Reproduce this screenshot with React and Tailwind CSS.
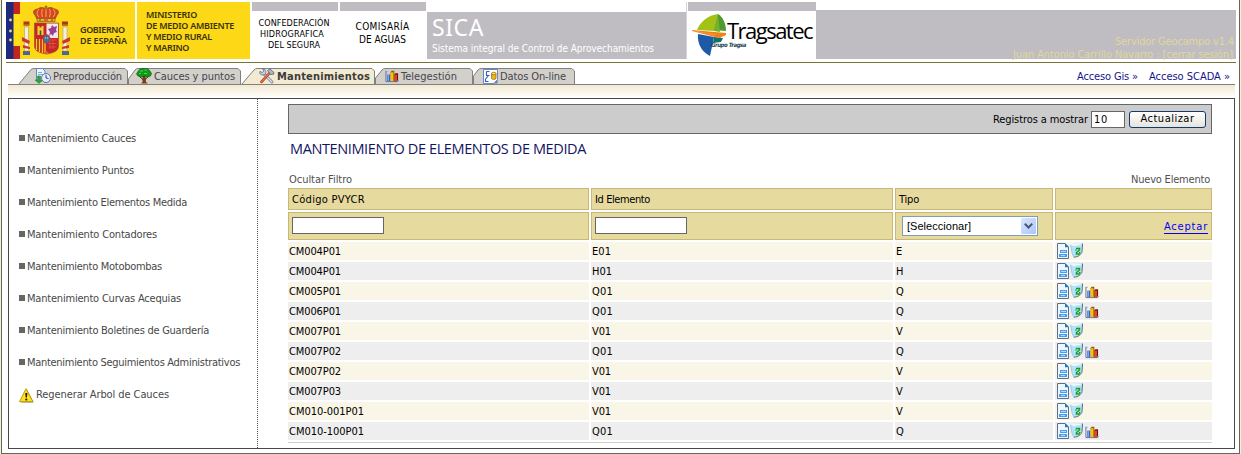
import React, { useLayoutEffect, useRef, useState } from "react";

/* Text run spread evenly over a given width by adjusting its tracking. */
function Fit({ w, children, className = "" }) {
  const ref = useRef(null);
  const [spacing, setSpacing] = useState(0);
  useLayoutEffect(() => {
    const natural = ref.current.getBoundingClientRect().width;
    setSpacing((w - natural) / String(children).length);
  }, [w, children]);
  return (
    <span ref={ref} className={"inline-block whitespace-nowrap " + className} style={{ letterSpacing: spacing + "px" }}>
      {children}
    </span>
  );
}

function Crest() {
  return (
    <svg className="block h-[57px] w-[64px] shrink-0" viewBox="0 0 64 57">
      <rect width="8" height="57" fill="#1f2a7c" />
      <rect x="7.5" width="6.5" height="12" fill="#c3261c" />
      <rect x="7.5" y="12" width="6.5" height="32" fill="#ffe01a" />
      <rect x="7.5" y="44" width="6.5" height="13" fill="#c3261c" />
      <g fill="#e9dc9a">
        <circle cx="4.5" cy="18" r="1.4" />
        <circle cx="4.5" cy="29" r="1.4" />
        <circle cx="4.5" cy="38" r="1.4" />
      </g>
      {/* pillars */}
      <g>
        <rect x="18.5" y="25" width="4" height="24" fill="#f3eee0" stroke="#9b9078" strokeWidth=".5" />
        <rect x="57" y="25" width="4" height="24" fill="#f3eee0" stroke="#9b9078" strokeWidth=".5" />
        <path d="M17.5 19.5h6v3h-6zM56 19.5h6v3h-6z" fill="#b5321e" />
        <path d="M17.5 23h6M56 23h6" stroke="#8a6a10" strokeWidth="1.4" />
        <path d="M17 50h7v3h-7zM56 50h7v3h-7z" fill="#3d6b9a" />
        <path d="M17 49.5h7M56 49.5h7" stroke="#8a6a10" />
        <path d="M16 35l8 4-1 3-7-3zM64 35l-8 4 1 3 7-3zM17 43l7 2v2l-7-1zM63 43l-7 2v2l7-1z" fill="#c9382a" />
      </g>
      {/* crown */}
      <path d="M29 13c-3-3-1-6 3-6 2-2 5-2 8 0 3-2 6-2 8 0 4 0 6 3 3 6l-2 4H31z" fill="#d6422c" stroke="#8f5a12" strokeWidth=".9" />
      <path d="M33 15c-3-3-2-6 0-8M47 15c3-3 2-6 0-8M40 15V6M36.500 15c-1-3-1-6 0-8M43.500 15c1-3 1-6 0-8" stroke="#f0b936" strokeWidth="1" fill="none" />
      <path d="M38.700 5h2.600M40 3.500v4" stroke="#8f5a12" strokeWidth="1.100" />
      <path d="M31 16.500h18v3H31z" fill="#e8b130" stroke="#8f5a12" strokeWidth=".7" />
      <path d="M33 18h2M38 18h4M45 18h2" stroke="#b82a24" strokeWidth="1.200" />
      {/* shield */}
      <path d="M28.500 21h24v23c0 5-5 7-12 8-7-1-12-3-12-8z" fill="#c8242a" stroke="#8c5a1c" strokeWidth=".7" />
      <path d="M40.500 21.500H52V36H40.500z" fill="#f4e6ea" />
      <path d="M43 34l1-4-2-3 3-1 1-3 2 2 3-1-1 4 1 2-3 1-1 3-2-2z" fill="#9b3f92" />
      <path d="M31.500 24h2v1.500h2V24h2v9h-6z" fill="#f2cf33" />
      <path d="M33.700 28.500h1.600V33h-1.600z" fill="#2e5b34" />
      <path d="M30.500 37v11M33.500 37v13M36.500 37v14M39 37v15" stroke="#f5cf1b" strokeWidth="1.300" />
      <path d="M42.500 38h8M42.500 41.500h8M43 45h7M44 38v9M47 38v9" stroke="#dc6a4e" strokeWidth=".6" />
      <ellipse cx="40.500" cy="37" rx="3.400" ry="4.300" fill="#3e6fa8" stroke="#c8342a" strokeWidth=".9" />
      <circle cx="39.400" cy="36" r=".7" fill="#e7d26a" />
      <circle cx="41.600" cy="36" r=".7" fill="#e7d26a" />
      <path d="M37 52l3.500-3 3.500 3z" fill="#d4662a" />
    </svg>
  );
}

function TragsatecMark() {
  return (
    <svg className="absolute left-[5px] top-[12px] h-[44px] w-[38px]" viewBox="0 0 38 44">
      <path d="M5 16C8 8 16 1 26 0L22 17z" fill="#a3c214" />
      <path d="M26 0c5 3 8 10 8 17L22 16z" fill="#4f9a2e" />
      <path d="M26 0l-4 17 6 1z" fill="#76b02a" />
      <path d="M6 20l16 3-4 19C10 38 5 30 6 20z" fill="#1c5aa8" />
      <path d="M22 23l9 1-2 4-8 1z" fill="#14706a" />
      <path d="M0 16l34 3v2l-7 3L0 17z" fill="#f08018" />
      <path d="M0 16.500l24 4.500" stroke="#f6b26a" strokeWidth=".5" />
    </svg>
  );
}

function ClockDocIcon() {
  return (
    <svg className="block h-4 w-4" viewBox="0 0 16 16">
      <path d="M1.500.5h6l2.500 2.500v9.500H1.500z" fill="#eef5fd" stroke="#5b8bc4" />
      <path d="M3 4.500h4M3 6.500h5" stroke="#7fa9dc" />
      <path d="M2.500 8h3v4H8l-4 3.500L0 12h2.500z" fill="#2fa23a" stroke="#1c7a28" strokeWidth=".5" />
      <circle cx="11" cy="10" r="4.500" fill="#e6effb" stroke="#5872b8" />
      <path d="M11 7v3l2.500.5" stroke="#33468c" fill="none" />
    </svg>
  );
}

function TreeIcon() {
  return (
    <svg className="block h-4 w-4" viewBox="0 0 16 16">
      <path d="M6.500 8h3l.5 6 2 1.500H5L6.500 14z" fill="#7a3d10" />
      <path d="M3.500 8.500L7 11.500M12.500 8.500l-3.500 3" stroke="#3a2508" />
      <path d="M2 3.500l2-2.500 4-.8 4 .8 2 2 1.500 2.500-1 2.500-3.500 1L8 7.800 5 9 2 8 .5 6z" fill="#0f9a1a" stroke="#0a4a10" strokeWidth=".6" />
      <path d="M4 3h3M8.500 2h2.500M3 5.500h2M8 5.500h3" stroke="#3fe04a" strokeWidth="1.100" />
    </svg>
  );
}

function ToolsIcon() {
  return (
    <svg className="block h-4 w-4" viewBox="0 0 16 16">
      <path d="M4.500 5.500l8.500 8.500" stroke="#4d5f80" strokeWidth="2.600" strokeLinecap="round" />
      <path d="M4.500 5.500l8.500 8.500" stroke="#dde7f5" strokeWidth="1.500" strokeLinecap="round" />
      <path d="M3.500.8L5 3 3.300 4.700 1 3.300.7 5.500 3 7l3-.5L7 4 5.800 1.300z" fill="#c9d6ec" stroke="#4d5f80" strokeWidth=".7" />
      <path d="M10.500 5L2.500 13.800" stroke="#9b2a14" strokeWidth="2.600" strokeLinecap="round" />
      <path d="M10.500 5L2.500 13.800" stroke="#f0714a" strokeWidth="1.400" strokeLinecap="round" />
      <path d="M8.500 2.500L11 1l4 3.500-.5 2-1.500-.5-1 1z" fill="#a9b7cf" stroke="#46536e" strokeWidth=".7" />
    </svg>
  );
}

function BarsIcon({ className = "" }) {
  return (
    <svg className={"block " + className} viewBox="0 0 15 15">
      <path d="M1 2v11.500h12.500l1-1.500" fill="none" stroke="#5c6fa0" strokeWidth="1" />
      <path d="M1 2.500h2" stroke="#8fa2cc" />
      <rect x="2.500" y="6" width="3" height="7" fill="#2f62d0" />
      <rect x="3.200" y="6.500" width=".9" height="6" fill="#8fb8f5" />
      <path d="M6 3.500L7 2h3v10l-1 1H6z" fill="#8a6208" />
      <rect x="6" y="3.500" width="3" height="9.500" fill="#f7bd14" />
      <path d="M10 6l1-1.500h3V11l-1 2h-3z" fill="#6d160c" />
      <rect x="10" y="6" width="2.800" height="7" fill="#dd4a20" />
    </svg>
  );
}

function DataIcon() {
  return (
    <svg className="block h-[15px] w-[15px]" viewBox="0 0 15 15">
      <path d="M.5.5h14v10l-3.500 4H.5z" fill="#fbfcff" stroke="#6b87c4" />
      <path d="M11 14.500l3.500-4v4z" fill="#5f7fb5" />
      <path d="M3.500 2.500h3M3.500 2.500v4h3M5.500 6.500L3 9.500M2.500 9.500v3h3" fill="none" stroke="#2c5cc5" strokeWidth="1.100" />
      <path d="M8.500 4.500v5c1 1.200 3.500 1.200 4.500 0v-5z" fill="#f3b70c" stroke="#8a6208" strokeWidth=".7" />
      <ellipse cx="10.750" cy="4.500" rx="2.250" ry="1.200" fill="#ffe27a" stroke="#8a6208" strokeWidth=".7" />
    </svg>
  );
}

function DocIcon() {
  return (
    <svg className="block h-4 w-3 shrink-0" viewBox="0 0 12 16">
      <path d="M.5.5h7.500l3.500 3.500v11.500H.5z" fill="#eef6ff" stroke="#5f6e84" />
      <path d="M8 0l4 4.200H8z" fill="#1f78c4" />
      <path d="M3 7h7v3H3zM2 11h8v3H2z" fill="#4a9cec" />
      <path d="M4 8.500h5M4 12.500h4" stroke="#b5d9fb" />
    </svg>
  );
}

function BinIcon() {
  return (
    <svg className="block h-[15px] w-[13px]" viewBox="0 0 13 15">
      <path d="M.3 2L3.500.8 12.700.4 12 8.500c-.5 2.500-3 5-8.500 5.700L2 10z" fill="#b4e2fb" />
      <path d="M.5 2l3.500 1 8-1.600L9 .7 3.500.8z" fill="#effaff" />
      <path d="M3.800 14.200c4.500-.2 7.700-2.700 8.200-5.700l.6-8" fill="none" stroke="#5b7076" strokeWidth="1" />
      <path d="M.5 2L2 10l1.800 4.200" fill="none" stroke="#8fc4e6" strokeWidth=".8" />
      <path d="M6 5.500h3.500v1.500L6.500 9.500V11H10" fill="none" stroke="#14a01c" strokeWidth="1.500" />
      <path d="M5.200 7h1.500M9 9.500h1.500" stroke="#0f8d18" strokeWidth="1.200" />
    </svg>
  );
}

function WarningIcon() {
  return (
    <svg className="block h-[15px] w-[15px]" viewBox="0 0 15 15">
      <path d="M8 1.500L14.700 14.500H2z" fill="#8c8c7a" />
      <path d="M7 .7L14 13.700H.5z" fill="#ffe21a" stroke="#b39408" strokeWidth=".9" strokeLinejoin="round" />
      <path d="M6.200 5h2.200l-.5 4.500H6.700z" fill="#1c1c10" />
      <circle cx="7.300" cy="11.500" r="1.100" fill="#1c1c10" />
    </svg>
  );
}

function Tab({ box, shape, fill, icon, w, label, bold, pad }) {
  return (
    <div className={"relative flex h-[17px] shrink-0 items-start " + box + " " + pad}>
      <svg className="absolute inset-0 h-full w-full overflow-visible">
        <path d={shape} fill={fill} stroke="#808080" />
      </svg>
      <span className="relative flex h-4 items-center gap-[2px]">
        {icon}
        <Fit w={w} className={"pt-[2px] " + (bold ? "font-bold text-[#3c3c3c]" : "text-[#45454f]")}>{label}</Fit>
      </span>
    </div>
  );
}

const MENU = [
  ["Mantenimiento Cauces", 109],
  ["Mantenimiento Puntos", 107],
  ["Mantenimiento Elementos Medida", 160],
  ["Mantenimiento Contadores", 130],
  ["Mantenimiento Motobombas", 135],
  ["Mantenimiento Curvas Acequias", 154],
  ["Mantenimiento Boletines de Guardería", 182],
  ["Mantenimiento Seguimientos Administrativos", 213],
];

const ROWS = [
  ["CM004P01", "E01", "E"],
  ["CM004P01", "H01", "H"],
  ["CM005P01", "Q01", "Q"],
  ["CM006P01", "Q01", "Q"],
  ["CM007P01", "V01", "V"],
  ["CM007P02", "Q01", "Q"],
  ["CM007P02", "V01", "V"],
  ["CM007P03", "V01", "V"],
  ["CM010-001P01", "V01", "V"],
  ["CM010-100P01", "Q01", "Q"],
];

const GRID = "grid grid-cols-[301px_302px_158px_157px] gap-x-[2px]";
const HEAD = "flex items-center border border-[#c8b878] bg-[#e7da9f]";

function Header() {
  return (
    <header className="flex h-[57px] w-[1230px] text-black">
      <div className="flex w-[129px] items-center bg-[#fdd816]">
        <Crest />
        <div className="flex flex-col pl-[10px] pt-[9px] font-['Noto_Sans'] text-[9px] font-semibold leading-[11px] text-[#3a3208] [font-stretch:normal]">
          <Fit w={45}>GOBIERNO</Fit>
          <Fit w={47}>DE ESPAÑA</Fit>
        </div>
      </div>
      <div className="ml-[2px] flex w-[113px] flex-col bg-[#fdd816] pl-[9px] pt-[8px] font-['Noto_Sans'] text-[9px] font-semibold leading-[10.900px] text-[#3a3208] [font-stretch:normal]">
        <Fit w={51} className="self-start">MINISTERIO</Fit>
        <Fit w={88} className="self-start">DE MEDIO AMBIENTE</Fit>
        <Fit w={66} className="self-start">Y MEDIO RURAL</Fit>
        <Fit w={43} className="self-start">Y MARINO</Fit>
      </div>
      <div className="ml-[2px] flex w-[86px] flex-col items-center border-t-[9px] border-[#bfbdc1] pr-[2px] pt-[7px] text-[9px] leading-[11px]">
        <Fit w={71}>CONFEDERACIÓN</Fit>
        <Fit w={64} className="-ml-[4px]">HIDROGRAFICA</Fit>
        <Fit w={52}>DEL SEGURA</Fit>
      </div>
      <div className="ml-[2px] flex w-[86px] flex-col items-center border-t-[9px] border-[#bfbdc1] pr-px pt-[10px] text-[10px] leading-[12.500px]">
        <Fit w={54}>COMISARÍA</Fit>
        <Fit w={47}>DE AGUAS</Fit>
      </div>
      <div className="ml-px mt-[10px] flex w-[259px] flex-col bg-[#bfbdc1] pl-[5px] text-white">
        <Fit w={52} className="mt-[3px] self-start font-['Noto_Sans'] text-[23px] leading-[25px] [font-stretch:normal]">SICA</Fit>
        <Fit w={222} className="mt-px self-start text-[10px] leading-[15px]">Sistema integral de Control de Aprovechamientos</Fit>
      </div>
      <div className="relative w-[130px] border-l border-[#d5d3d7]">
        <div className="ml-px h-[9px] bg-[#bfbdc1]" />
        <TragsatecMark />
        <div className="absolute left-[40px] top-[17px] h-[22px] font-['Open_Sans'] text-[22px] font-medium leading-[22px] [font-stretch:normal]">
          <Fit w={85}>Tragsatec</Fit>
        </div>
        <div className="absolute left-[24px] top-[40px] h-[6px] text-[6px] font-bold italic leading-[6px] text-[#1f3f50]">
          <Fit w={35}>Grupo Tragsa</Fit>
        </div>
      </div>
      <div className="mt-[8px] flex flex-1 flex-col items-end bg-[#bfbdc1] pt-[25px] text-[11px] leading-[13px] text-[#dfd79c]">
        <Fit w={119} className="mr-[2px]">Servidor Geocampo v1.4</Fit>
        <Fit w={220} className="mr-[3px]">Juan Antonio Carrillo Navarro : [cerrar sesión]</Fit>
      </div>
    </header>
  );
}

function Tabs() {
  return (
    <nav className="ml-[2px] mt-[5px] flex h-[17px] w-[1227px] border-b border-[#808080] text-[11px]">
      <Tab box="ml-[10px] w-[110px] -mb-px" pad="pl-[17px]" shape="M0.500 16.500L13 1.500Q14 .5 16 .5H107L109.500 3V16.500Z" fill="#d2d0c9" icon={<ClockDocIcon />} w={69} label="Preproducción" />
      <Tab box="w-[113px] -mb-px" pad="pl-[8px]" shape="M.5 16.500V11L7 2Q8 .5 10 .5H110L112.500 3V16.500Z" fill="#d2d0c9" icon={<TreeIcon />} w={81} label="Cauces y puntos" />
      <Tab box="w-[134px] -mb-px" pad="pl-[18px]" shape="M.5 16.500L13 2Q14 .5 16 .5H131L133.500 3V16.500Z" fill="#f3ead2" icon={<ToolsIcon />} w={93} label="Mantenimientos" bold />
      <Tab box="w-[98px] -mb-px" pad="pl-[10px]" shape="M.5 16.500V10L7 2Q8 .5 10 .5H95L97.500 3V16.500Z" fill="#d2d0c9" icon={<BarsIcon className="h-[14px] w-[14px]" />} w={56} label="Telegestión" />
      <Tab box="w-[102px] -mb-px" pad="pl-[10px]" shape="M.5 16.500V8L5 2Q6 .5 8 .5H98.500L101.500 3V16.500Z" fill="#d2d0c9" icon={<DataIcon />} w={66} label="Datos On-line" />
      <div className="flex flex-1 items-center justify-end gap-[11px] pr-[5px] pt-[2px] text-[#14148c]">
        <Fit w={61}>Acceso Gis »</Fit>
        <Fit w={81}>Acceso SCADA »</Fit>
      </div>
    </nav>
  );
}

function Sidebar() {
  return (
    <aside className="w-[249px] shrink-0 border-r border-dotted border-[#555] pl-[10px] pt-[24px] text-[11px] text-[#484848]">
      <ul>
        {MENU.map(([label, w]) => (
          <li key={label} className="flex h-[32px] items-center gap-[2px]">
            <span className="mb-[2px] h-[6px] w-[6px] bg-[#666]" />
            <Fit w={w}>{label}</Fit>
          </li>
        ))}
        <li className="flex h-[32px] items-center gap-[2px]">
          <span className="pt-px"><WarningIcon /></span>
          <Fit w={133}>Regenerar Arbol de Cauces</Fit>
        </li>
      </ul>
    </aside>
  );
}

function Content() {
  return (
    <main className="ml-[30px] flex w-[924px] flex-col pt-[5px] text-[11px]">
      <div className="flex h-[30px] items-center justify-end border border-[#666] bg-[#ccc] pr-[5px]">
        <Fit w={95} className="pt-[3px]">Registros a mostrar</Fit>
        <div className="ml-[3px] mt-px flex h-[17px] w-[34px] items-center border border-[#666] bg-white pl-[2px] pt-px">
          <Fit w={14}>10</Fit>
        </div>
        <button className="ml-[4px] flex h-[17px] w-[77px] items-center justify-center rounded-[3px] border border-[#123a6b] bg-gradient-to-b from-white to-[#e6e4dc]">
          <Fit w={54}>Actualizar</Fit>
        </button>
      </div>
      <h1 className="mt-[5px] h-[20px] pl-[2px] font-['Open_Sans'] text-[14.500px] leading-[20px] text-[#14145f] [font-stretch:normal]">
        <Fit w={296}>MANTENIMIENTO DE ELEMENTOS DE MEDIDA</Fit>
      </h1>
      <div className="mt-[13px] flex h-[16px] items-center justify-between pl-px pr-[2px] text-[#505050]">
        <Fit w={63}>Ocultar Filtro</Fit>
        <Fit w={79}>Nuevo Elemento</Fit>
      </div>
      <div className={"h-[22px] " + GRID}>
        <div className={HEAD + " pl-[3px] pt-[2px]"}><Fit w={73}>Código PVYCR</Fit></div>
        <div className={HEAD + " pl-[3px] pt-[2px]"}><Fit w={55}>Id Elemento</Fit></div>
        <div className={HEAD + " pl-[3px] pt-[2px]"}><Fit w={20}>Tipo</Fit></div>
        <div className={HEAD} />
      </div>
      <div className={"mt-[2px] h-[28px] " + GRID}>
        <div className={HEAD + " pl-[3px]"}><div className="mb-px h-[17px] w-[92px] border border-[#666] bg-white" /></div>
        <div className={HEAD + " pl-[3px]"}><div className="mb-px h-[17px] w-[92px] border border-[#666] bg-white" /></div>
        <div className={HEAD + " pl-[6px]"}>
          <div className="flex h-[20px] w-[136px] items-center justify-between border border-[#7f9db9] bg-white pl-[4px] pr-px">
            <Fit w={64} className="font-['Liberation_Sans']">[Seleccionar]</Fit>
            <span className="flex h-[16px] w-[15px] items-center justify-center rounded-[1px] bg-gradient-to-br from-[#dbe6fd] to-[#adc5f5]">
              <svg className="h-[6px] w-[9px]" viewBox="0 0 9 6"><path d="M.8.8l3.700 3.700L8.200.8" fill="none" stroke="#44597c" strokeWidth="2" /></svg>
            </span>
          </div>
        </div>
        <div className={HEAD + " justify-end pr-[3px] pt-[2px]"}>
          <a className="border-b border-[#0000ff] leading-[12px] text-[#0000ff]"><Fit w={44}>Aceptar</Fit></a>
        </div>
      </div>
      <div className="mt-[2px] flex flex-col gap-[2px]">
        {ROWS.map(([code, id, type], i) => {
          const cell = "flex h-[18px] items-center " + (i % 2 ? "bg-[#eeeeee]" : "bg-[#f9f5e7]");
          return (
            <div key={i} className={GRID}>
              <div className={cell + " pl-px"}><Fit w={code.length > 8 ? 75 : 52} className="pt-[2px]">{code}</Fit></div>
              <div className={cell + " pl-px"}><Fit w={id[0] === "Q" ? 21 : id[0] === "H" ? 20 : 19} className="pt-[2px]">{id}</Fit></div>
              <div className={cell + " pl-px"}><span className="pt-[2px]">{type}</span></div>
              <div className={cell + " pl-[2px]"}>
                <DocIcon />
                <span className="mb-px ml-px"><BinIcon /></span>
                {type === "Q" && <BarsIcon className="ml-[2px] mt-px h-[14px] w-[14px]" />}
              </div>
            </div>
          );
        })}
      </div>
      <div className="mt-[2px] h-px bg-[#d2cfc8]" />
    </main>
  );
}

export default function App() {
  return (
    <div className="h-[454px] w-[1241px] overflow-hidden bg-[#f3efd9] pl-px pr-px font-['DejaVu_Sans_Condensed','DejaVu_Sans',sans-serif] text-black [font-stretch:condensed]">
      <div className="h-[454px] w-[1239px] border-x border-b border-[#666658] bg-white pl-[4px] pt-[2px]">
        <Header />
        <div className="mt-[3px] h-px w-[1230px] bg-[#7a7432]" />
        <Tabs />
        <div className="ml-[2px] h-[11px] w-[1227px] bg-gradient-to-b from-[#f3e9d3] to-[#fdfcf5]" />
        <div className="ml-[2px] mt-[2px] flex h-[351px] w-[1227px] border border-[#484848]">
          <Sidebar />
          <Content />
        </div>
      </div>
    </div>
  );
}
